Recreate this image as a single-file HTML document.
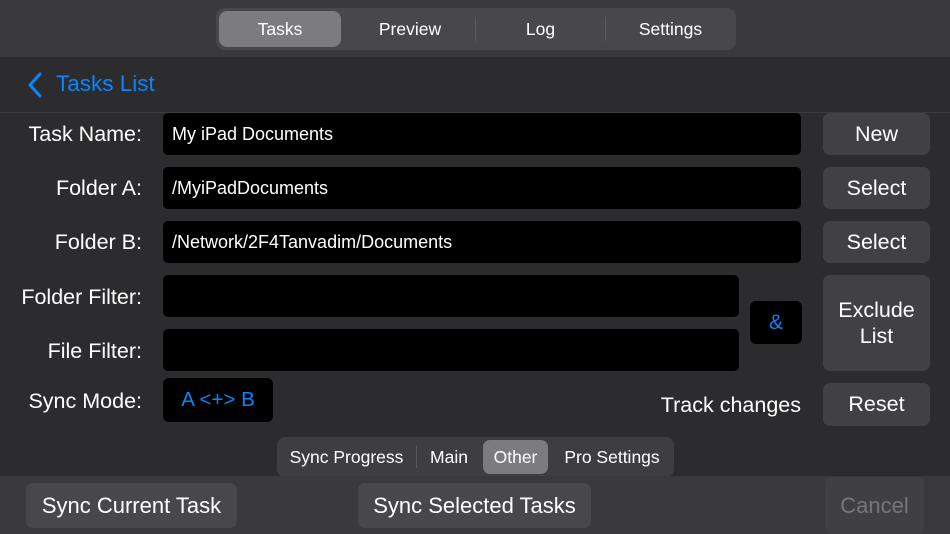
<!DOCTYPE html><html><head><style>
body{margin:0;width:950px;height:534px;background:#2c2c2e;font-family:"Liberation Sans",sans-serif;color:#fff;position:relative;overflow:hidden}
div{position:absolute;box-sizing:border-box}
.c{display:flex;align-items:center;justify-content:center}
.btn{background:#414144;border-radius:7px;font-size:21.5px}
.fld{background:#000;border-radius:5px;font-size:18px;padding-left:9px;display:flex;align-items:center}
.lbl{font-size:21.5px;text-align:right;width:142px;left:0}
.sep{width:1px;background:#5a5a5e}
.s{font-size:17.5px}
</style></head><body>
<div style="left:0;top:0;width:950px;height:57px;background:#3a3a3c"></div>
<div style="left:216px;top:8px;width:520px;height:42px;background:#48484b;border-radius:9px"></div>
<div class="c s" style="left:219px;top:11px;width:122px;height:36px;background:#7b7b80;border-radius:8px">Tasks</div>
<div class="c s" style="left:345px;top:11px;width:130px;height:36px">Preview</div>
<div class="sep" style="left:475px;top:17px;height:24px"></div>
<div class="c s" style="left:476px;top:11px;width:129px;height:36px">Log</div>
<div class="sep" style="left:605px;top:17px;height:24px"></div>
<div class="c s" style="left:606px;top:11px;width:129px;height:36px">Settings</div>
<svg style="position:absolute;left:27px;top:72px" width="16" height="26"><path d="M13 2 L3 13 L13 24" stroke="#0a84ff" stroke-width="3" fill="none" stroke-linecap="round" stroke-linejoin="round"/></svg>
<div style="left:56px;top:71px;font-size:22.5px;color:#0a84ff">Tasks List</div>
<div style="left:0;top:112px;width:950px;height:1px;background:#3c3c3e"></div>
<div class="lbl" style="top:122px">Task Name:</div>
<div class="fld" style="left:163px;top:113px;width:638px;height:42px">My iPad Documents</div>
<div class="btn c" style="left:823px;top:113px;width:107px;height:42px">New</div>
<div class="lbl" style="top:176px">Folder A:</div>
<div class="fld" style="left:163px;top:167px;width:638px;height:42px">/MyiPadDocuments</div>
<div class="btn c" style="left:823px;top:167px;width:107px;height:42px">Select</div>
<div class="lbl" style="top:230px">Folder B:</div>
<div class="fld" style="left:163px;top:221px;width:638px;height:42px">/Network/2F4Tanvadim/Documents</div>
<div class="btn c" style="left:823px;top:221px;width:107px;height:42px">Select</div>
<div class="lbl" style="top:285px">Folder Filter:</div>
<div class="fld" style="left:163px;top:275px;width:576px;height:42px"></div>
<div class="lbl" style="top:339px">File Filter:</div>
<div class="fld" style="left:163px;top:329px;width:576px;height:42px"></div>
<div class="c" style="left:750px;top:301px;width:52px;height:43px;background:#000;border-radius:6px;color:#0a84ff;font-size:21px">&amp;</div>
<div class="btn c" style="left:823px;top:275px;width:107px;height:96px;text-align:center;line-height:26px">Exclude<br>List</div>
<div class="lbl" style="top:389px">Sync Mode:</div>
<div class="c" style="left:163px;top:378px;width:110px;height:44px;background:#000;border-radius:6px;color:#0a84ff;font-size:20.5px">A &lt;+&gt; B</div>
<div style="left:600px;width:201px;text-align:right;top:393px;font-size:21.5px">Track changes</div>
<div class="btn c" style="left:823px;top:383px;width:107px;height:43px">Reset</div>
<div style="left:277px;top:437px;width:397px;height:40px;background:#3e3e41;border-radius:8px"></div>
<div class="c s" style="left:280px;top:440px;width:133px;height:34px">Sync Progress</div>
<div class="sep" style="left:416px;top:446px;height:22px"></div>
<div class="c s" style="left:418px;top:440px;width:62px;height:34px">Main</div>
<div class="c s" style="left:483px;top:440px;width:65px;height:34px;background:#7b7b80;border-radius:7px">Other</div>
<div class="c s" style="left:552px;top:440px;width:120px;height:34px">Pro Settings</div>
<div style="left:0;top:476px;width:950px;height:58px;background:#3a3a3c"></div>
<div class="btn c" style="left:26px;top:483px;width:211px;height:45px;background:#48484b;font-size:22px">Sync Current Task</div>
<div class="btn c" style="left:358px;top:483px;width:233px;height:45px;background:#48484b;font-size:22px">Sync Selected Tasks</div>
<div class="btn c" style="left:825px;top:477px;width:99px;height:57px;background:#404043;color:#77777b;font-size:22px">Cancel</div>
</body></html>
